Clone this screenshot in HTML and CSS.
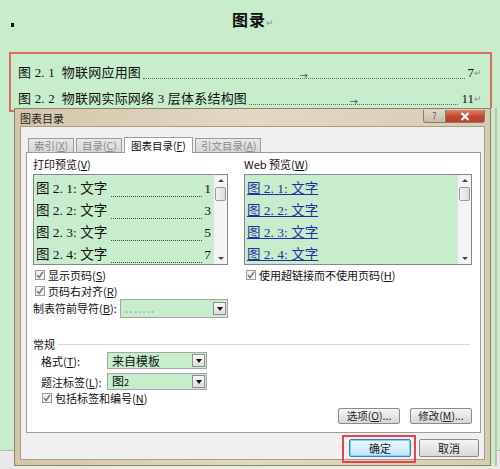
FILE: index.html
```html
<!DOCTYPE html>
<html>
<head>
<meta charset="utf-8">
<link rel="stylesheet" href="styles.css">
</head>
<body>
<div class="page">
  <div class="doc">
    <div class="doc-head">
      <span class="bullet"></span>
      <h1 class="doc-title">图录<span class="ret">↵</span></h1>
    </div>
    <div class="toc">
      <div class="toc-line">
        <span class="toc-text">图 2. 1&nbsp; 物联网应用图</span>
        <span class="toc-lead"><span class="tab-arrow">→</span></span>
        <span class="toc-num">7</span><span class="ret">↵</span>
      </div>
      <div class="toc-line">
        <span class="toc-text">图 2. 2&nbsp; 物联网实际网络 3 层体系结构图</span>
        <span class="toc-lead"><span class="tab-arrow">→</span></span>
        <span class="toc-num">11</span><span class="ret">↵</span>
      </div>
    </div>
  </div>
  <div class="statusbar"></div>

  <div class="dialog">
    <div class="titlebar">
      <span class="title">图表目录</span>
      <div class="title-btns">
        <span class="tbtn help">?</span>
        <span class="tbtn close">
          <svg width="10" height="9" viewBox="0 0 10 9"><path d="M1.5 1 L8.5 8 M8.5 1 L1.5 8" stroke="#fff" stroke-width="2.2"/></svg>
        </span>
      </div>
    </div>
    <div class="client">
      <div class="tabs">
        <span class="tab">索引(<u>X</u>)</span>
        <span class="tab">目录(<u>C</u>)</span>
        <span class="tab active">图表目录(<u>F</u>)</span>
        <span class="tab">引文目录(<u>A</u>)</span>
      </div>
      <div class="panel">
        <div class="cols">
          <div class="col col-left">
            <div class="lbl">打印预览(<u>V</u>)</div>
            <div class="listbox">
              <div class="items">
                <div class="item"><span>图 2. 1: 文字</span><span class="dots"></span><span>1</span></div>
                <div class="item"><span>图 2. 2: 文字</span><span class="dots"></span><span>3</span></div>
                <div class="item"><span>图 2. 3: 文字</span><span class="dots"></span><span>5</span></div>
                <div class="item"><span>图 2. 4: 文字</span><span class="dots"></span><span>7</span></div>
              </div>
              <div class="scroll">
                <span class="sarrow up"></span>
                <span class="thumb"></span>
                <span class="sarrow down"></span>
              </div>
            </div>
            <div class="chk first"><span class="box"><svg width="8" height="8" viewBox="0 0 8 8"><path d="M1 4 L3 6.5 L7 1" fill="none" stroke="#777" stroke-width="1.4"/></svg></span><span class="chk-text">显示页码(<u>S</u>)</span></div>
            <div class="chk"><span class="box"><svg width="8" height="8" viewBox="0 0 8 8"><path d="M1 4 L3 6.5 L7 1" fill="none" stroke="#777" stroke-width="1.4"/></svg></span><span class="chk-text">页码右对齐(<u>R</u>)</span></div>
            <div class="leader-row">
              <span class="leader-lbl">制表符前导符(<u>B</u>):</span>
              <div class="select wide"><span class="sel-text dim">.......</span><span class="drop"></span></div>
            </div>
          </div>
          <div class="col col-right">
            <div class="lbl">Web 预览(<u>W</u>)</div>
            <div class="listbox">
              <div class="items web">
                <div class="item"><a>图 2. 1: 文字</a></div>
                <div class="item"><a>图 2. 2: 文字</a></div>
                <div class="item"><a>图 2. 3: 文字</a></div>
                <div class="item"><a>图 2. 4: 文字</a></div>
              </div>
              <div class="scroll">
                <span class="sarrow up"></span>
                <span class="thumb"></span>
                <span class="sarrow down"></span>
              </div>
            </div>
            <div class="chk first"><span class="box"><svg width="8" height="8" viewBox="0 0 8 8"><path d="M1 4 L3 6.5 L7 1" fill="none" stroke="#777" stroke-width="1.4"/></svg></span><span class="chk-text">使用超链接而不使用页码(<u>H</u>)</span></div>
          </div>
        </div>

        <div class="group-head"><span>常规</span><span class="rule"></span></div>
        <div class="frow">
          <span class="flbl">格式(<u>T</u>):</span>
          <div class="select"><span class="sel-text">来自模板</span><span class="drop"></span></div>
        </div>
        <div class="frow second">
          <span class="flbl">题注标签(<u>L</u>):</span>
          <div class="select"><span class="sel-text">图<small>2</small></span><span class="drop"></span></div>
        </div>
        <div class="chk inset"><span class="box"><svg width="8" height="8" viewBox="0 0 8 8"><path d="M1 4 L3 6.5 L7 1" fill="none" stroke="#777" stroke-width="1.4"/></svg></span><span class="chk-text">包括标签和编号(<u>N</u>)</span></div>

        <div class="panel-btns">
          <span class="btn">选项(<u>O</u>)...</span>
          <span class="btn">修改(<u>M</u>)...</span>
        </div>
      </div>
      <div class="dlg-btns">
        <span class="btn big default">确定</span>
        <span class="btn big cancel">取消</span>
      </div>
    </div>
    <span class="highlight"></span>
  </div>
</div>
</body>
</html>
```

FILE: styles.css
```css
* { box-sizing: border-box; }
html, body { margin: 0; padding: 0; }
body {
  width: 500px;
  height: 469px;
  overflow: hidden;
  font-family: "Noto Sans CJK SC", "Liberation Sans", sans-serif;
  color: #111;
}
.page {
  position: relative;
  width: 500px;
  height: 469px;
  background: #c7edcc;
  display: flex;
  flex-direction: column;
}
.doc { flex: 1; }
.statusbar {
  height: 19px;
  border-top: 1px solid #b9b9b9;
  background: #e9e9e9;
}

/* document header */
.doc-head {
  height: 52px;
  display: flex;
  align-items: flex-start;
}
.bullet {
  width: 3px;
  height: 4px;
  background: #111;
  margin: 23px 0 0 11px;
}
.doc-title {
  margin: 8px 0 0 218px;
  font-size: 16px;
  font-weight: bold;
  line-height: 22px;
  letter-spacing: 1px;
}
.ret {
  font-size: 9px;
  color: #8d8d8d;
  font-weight: normal;
}

.toc {
  margin-left: 9px;
  width: 483px;
  height: 60px;
  border: 2px solid #df6b5e;
  padding: 6px 8px 0 7px;
}
.toc-line {
  height: 25px;
  display: flex;
  align-items: center;
  font-family: "Liberation Serif", "Noto Sans CJK SC", serif;
  font-size: 13px;
  line-height: 16px;
}
.toc-line + .toc-line { margin-top: 1px; }
.toc-text { white-space: nowrap; letter-spacing: 0.2px; }
.toc-lead {
  flex: 1;
  height: 12px;
  margin: 0 2px;
  border-bottom: 1px dotted #6a6a6a;
  display: flex;
  justify-content: center;
  align-items: flex-end;
}
.tab-arrow {
  font-family: "DejaVu Sans", sans-serif;
  font-size: 10px;
  color: #555;
  line-height: 10px;
  margin-bottom: -3px;
}
.toc-num { margin-left: 1px; }

/* dialog */
.dialog {
  position: absolute;
  left: 14px;
  top: 108px;
  width: 477px;
  height: 358px;
  border: 1px solid #8e826b;
  background: linear-gradient(90deg, #d4c6aa, #e3d8c2 50%, #d9ccb2);
  padding: 0 5px 5px 5px;
  display: flex;
  flex-direction: column;
  box-shadow: 4px 0 0 #c7edcc, 6px 0 0 #cdbf9f;
}
.titlebar {
  height: 17px;
  display: flex;
  align-items: flex-start;
  justify-content: space-between;
}
.title {
  font-size: 11px;
  line-height: 17px;
  color: #222;
  margin-top: 1px;
}
.title-btns {
  display: flex;
  margin-top: 1px;
}
.tbtn {
  height: 13px;
  display: flex;
  align-items: center;
  justify-content: center;
  border: 1px solid #8a7c66;
  border-top: none;
}
.help {
  width: 23px;
  background: linear-gradient(#e0d9cc, #c8bca8);
  font-size: 9px;
  line-height: 12px;
  color: #555;
  border-radius: 0 0 0 3px;
}
.close {
  width: 39px;
  background: linear-gradient(#e2826b, #c54631 55%, #b8402a);
  border-left: none;
  border-radius: 0 0 3px 0;
}

.client {
  flex: 1;
  background: #f0f0f0;
  border: 1px solid #a99d86;
  padding: 9px 3px 0 5px;
  display: flex;
  flex-direction: column;
}
.tabs {
  display: flex;
  align-items: flex-end;
  height: 16px;
  padding-left: 2px;
  position: relative;
  z-index: 1;
}
.tab {
  height: 14px;
  font-size: 10.5px;
  line-height: 13px;
  color: #8a8a8a;
  background: linear-gradient(#e9e9e9, #d6d6d6);
  border: 1px solid #9c9c9c;
  border-bottom: none;
  padding: 0 5px;
  margin-right: 2px;
  white-space: nowrap;
}
.tab.active {
  height: 16px;
  color: #111;
  background: #fff;
  line-height: 15px;
  padding: 0 6px;
  margin-bottom: -1px;
}
.tab:first-child { width: 46px; }
.tab:nth-child(2) { width: 46px; }
.tab:nth-child(3) { width: 69px; }
.tab:nth-child(4) { width: 66px; }

.panel {
  height: 281px;
  background: #fff;
  border: 1px solid #9c9c9c;
  padding: 5px 8px 8px 6px;
  display: flex;
  flex-direction: column;
  font-size: 11px;
  line-height: 12px;
}
.cols { display: flex; gap: 16px; }
.col-left { width: 195px; }
.col-right { width: 228px; }
.lbl {
  height: 12px;
  line-height: 12px;
  margin-bottom: 4px;
  white-space: nowrap;
}
.listbox {
  height: 91px;
  display: flex;
  border: 1px solid #828790;
}
.items {
  flex: 1;
  background: #c7edcc;
  font-family: "Liberation Serif", "Noto Sans CJK SC", serif;
  font-size: 13.5px;
  padding: 0 2px;
}
.item {
  height: 22px;
  padding-top: 2px;
  line-height: 16px;
  display: flex;
  align-items: flex-end;
  white-space: nowrap;
}
.dots {
  flex: 1;
  height: 13px;
  margin: 0 2px 0 4px;
  border-bottom: 1px dotted #444;
}
.web a {
  color: #1f2fa0;
  text-decoration: underline;
  text-underline-offset: 1px;
}
.scroll {
  width: 14px;
  background: #f4f4f4;
  border-left: 1px solid #e0e0e0;
  display: flex;
  flex-direction: column;
  align-items: center;
  padding: 4px 0;
}
.sarrow {
  width: 0;
  height: 0;
  border-left: 3px solid transparent;
  border-right: 3px solid transparent;
}
.sarrow.up { border-bottom: 3px solid #444; }
.sarrow.down { border-top: 3px solid #444; margin-top: auto; }
.thumb {
  width: 11px;
  height: 14px;
  margin-top: 5px;
  border: 1px solid #9a9a9a;
  border-radius: 2px;
  background: linear-gradient(90deg, #f4f4f4, #dcdcdc);
}

.chk {
  height: 16px;
  display: flex;
  align-items: center;
  white-space: nowrap;
  padding-left: 2px;
  line-height: 12px;
}
.chk-text { line-height: 12px; }
.chk.first { margin-top: 2px; }
.box {
  width: 10px;
  height: 10px;
  border: 1px solid #9a9a9a;
  background: #f2f2f2;
  margin-right: 3px;
  display: flex;
  align-items: center;
  justify-content: center;
}
.leader-row {
  display: flex;
  align-items: center;
  height: 20px;
  margin-top: -1px;
}
.leader-lbl { width: 87px; white-space: nowrap; }
.select {
  width: 100px;
  height: 17px;
  border: 1px solid #a5a5a5;
  background: #c7edcc;
  display: flex;
  align-items: center;
  padding: 1px;
}
.select.wide { width: 108px; height: 19px; }
.sel-text {
  flex: 1;
  font-size: 12px;
  line-height: 14px;
  padding-left: 3px;
  white-space: nowrap;
}
.sel-text small { font-size: 9px; }
.sel-text.dim { color: #9aa89c; letter-spacing: 1px; }
.drop {
  width: 13px;
  height: 13px;
  background: linear-gradient(#f8f8f8, #dedede);
  border: 1px solid #8e8e8e;
  position: relative;
}
.drop::after {
  content: "";
  position: absolute;
  left: 3px;
  top: 4px;
  border-left: 3px solid transparent;
  border-right: 3px solid transparent;
  border-top: 4px solid #111;
}

.group-head {
  display: flex;
  align-items: center;
  height: 12px;
  margin-top: 20px;
}
.rule {
  flex: 1;
  height: 1px;
  background: #d6d6d6;
  margin-left: 3px;
  margin-right: 2px;
}
.frow {
  display: flex;
  align-items: center;
  height: 17px;
  margin-top: 2px;
  padding-left: 8px;
}
.frow.second { margin-top: 4px; }
.flbl { width: 66px; white-space: nowrap; }
.chk.inset { padding-left: 9px; margin-top: 0; height: 16px; }

.panel-btns {
  margin-top: auto;
  display: flex;
  justify-content: flex-end;
  gap: 10px;
}
.btn {
  width: 62px;
  height: 16px;
  border: 1px solid #8a8a8a;
  border-radius: 2px;
  background: linear-gradient(#f6f6f6, #e6e6e6 50%, #d8d8d8);
  font-size: 10.5px;
  line-height: 14px;
  text-align: center;
  color: #222;
  white-space: nowrap;
}
.dlg-btns {
  display: flex;
  justify-content: flex-end;
  gap: 8px;
  margin-top: 6px;
  padding-right: 2px;
}
.btn.big { height: 18px; line-height: 16px; font-size: 11px; }
.btn.default {
  border-color: #3c7fb1;
  background: linear-gradient(#eaf6fd, #d9f0fc 50%, #bee6fd);
  box-shadow: inset 0 0 0 1px #7fd4f5;
}
.btn.cancel { width: 60px; }

.highlight {
  position: absolute;
  left: 327px;
  top: 326px;
  width: 74px;
  height: 28px;
  border: 2px solid #e8434a;
}
```
